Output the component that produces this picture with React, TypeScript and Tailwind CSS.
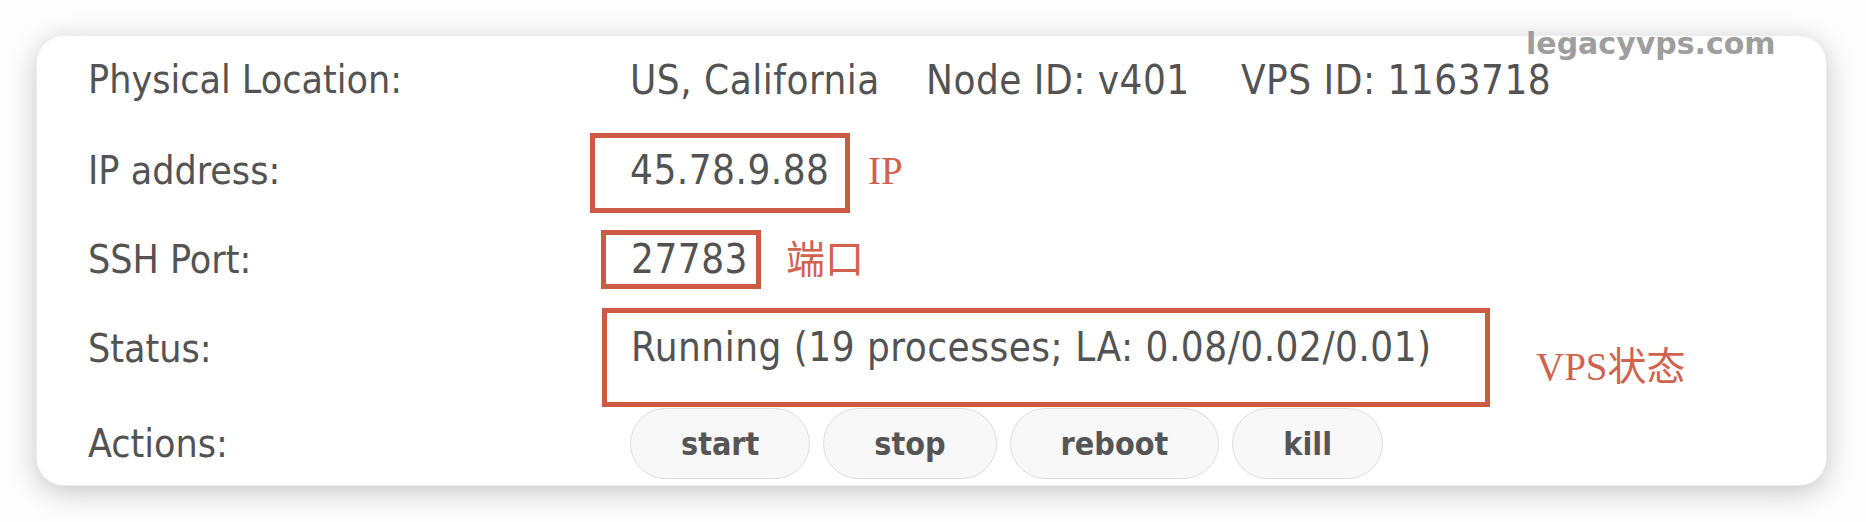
const base = "font-['DejaVu_Sans_Condensed','DejaVu_Sans',sans-serif] font-stretch-semi-condensed";
const note = "font-['Liberation_Serif','Noto_Sans_CJK_SC',serif] text-[39px] leading-none text-[#d0624e]";
const value = "text-[40px] leading-none tracking-[0.5px]";

const Label = ({ children }: { children: React.ReactNode }) => (
  <div className="w-[542px] shrink-0 text-[39px] leading-none">{children}</div>
);

const ActionButton = ({ label }: { label: string }) => (
  <button className="h-[71px] px-[50px] rounded-full border-[1.5px] border-[#dedede] bg-[#f8f8f8] text-[32px] font-bold leading-none text-[#555]">
    {label}
  </button>
);

export default function App() {
  return (
    <div className={`relative w-[1866px] h-[522px] bg-[#fdfdfd] pt-[35px] pl-[36px] ${base}`}>
      <div className="w-[1791px] h-[451px] rounded-[28px] bg-white border border-[#ececec] shadow-[0_6px_28px_rgba(0,0,0,0.22)] pl-[51px] text-[#535353] flex flex-col overflow-hidden">
        <div className="h-[88px] flex items-center">
          <Label>Physical Location:</Label>
          <div className={`flex ${value}`}>
            <span className="w-[296px]">US, California</span>
            <span className="w-[315px]">Node ID: v401</span>
            <span>VPS ID: 1163718</span>
          </div>
        </div>

        <div className="h-[94px] flex items-center">
          <Label>IP address:</Label>
          <div className={`ml-[-40px] mt-[6px] w-[260px] h-[80px] border-[5px] border-[#cd5a45] pl-[35px] pb-[6px] flex items-center ${value}`}>
            45.78.9.88
          </div>
          <span className={`ml-[18px] ${note}`}>IP</span>
        </div>

        <div className="h-[84px] flex items-center">
          <Label>SSH Port:</Label>
          <div className={`ml-[-29px] w-[160px] h-[59px] border-[5px] border-[#cd5a45] pl-[25px] flex items-center ${value}`}>
            27783
          </div>
          <span className={`ml-[25px] ${note}`}>端口</span>
        </div>

        <div className="h-[108px] flex items-start">
          <div className="pt-[28px]">
            <Label>Status:</Label>
          </div>
          <div className={`ml-[-28px] mt-[7px] w-[888px] h-[99px] border-[5px] border-[#cd5a45] pl-[24px] pt-[14px] ${value}`}>
            Running (19 processes; LA: 0.08/0.02/0.01)
          </div>
          <span className={`ml-[46px] mt-[46px] ${note}`}>VPS状态</span>
        </div>

        <div className="h-[77px] flex items-start">
          <div className="pt-[16px]">
            <Label>Actions:</Label>
          </div>
          <div className="flex gap-[13px]">
            <ActionButton label="start" />
            <ActionButton label="stop" />
            <ActionButton label="reboot" />
            <ActionButton label="kill" />
          </div>
        </div>
      </div>

      <div className="absolute left-[1526px] top-[29px] font-['DejaVu_Sans',sans-serif] font-stretch-normal text-[30px] font-bold leading-none text-[#9e9e9e]">
        legacyvps.com
      </div>
    </div>
  );
}
